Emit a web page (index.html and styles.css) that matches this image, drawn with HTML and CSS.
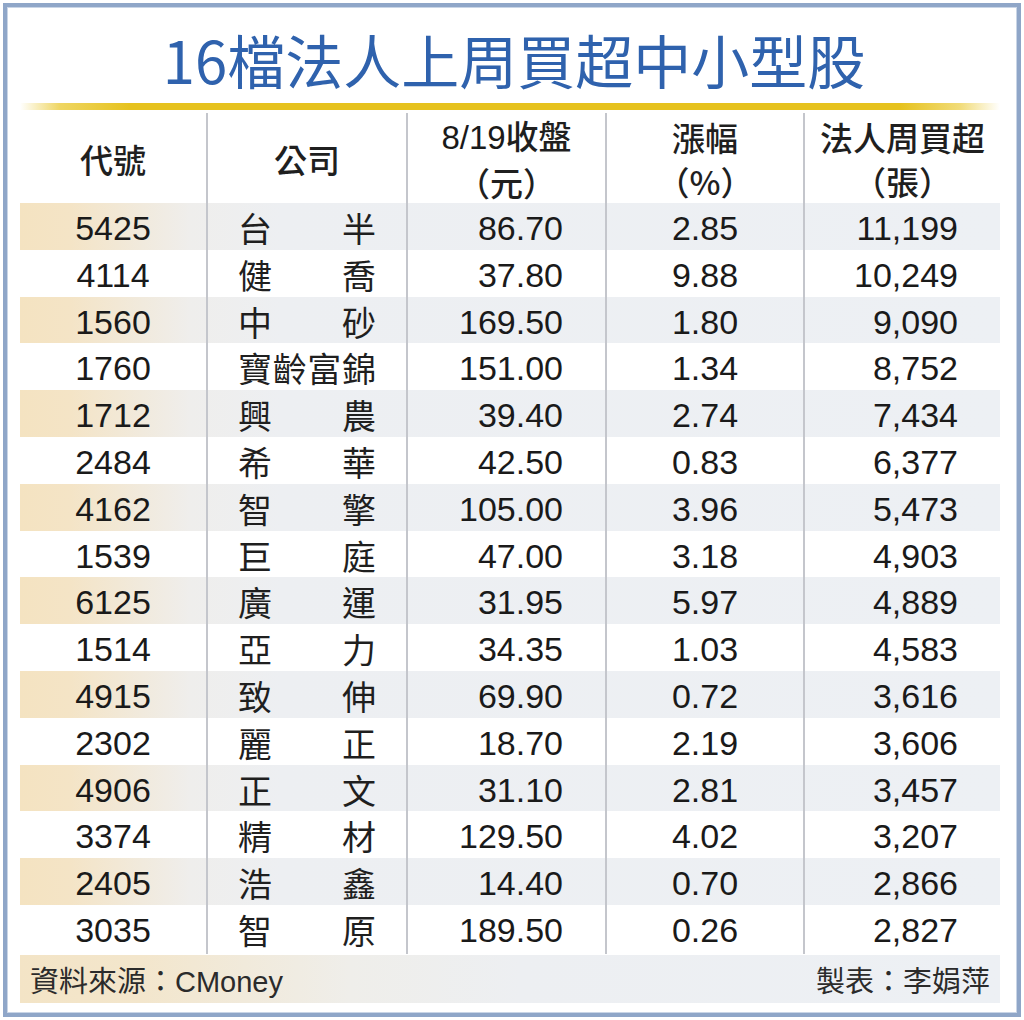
FILE: index.html
```html
<!DOCTYPE html>
<html lang="zh-Hant">
<head>
<meta charset="utf-8">
<title>16檔法人上周買超中小型股</title>
<link rel="stylesheet" href="styles.css">
</head>
<body>
<div class="frame">
  <h1 class="title">16檔法人上周買超中小型股</h1>
  <div class="rule"></div>
  <div class="table">
    <div class="row head">
      <div class="cell c1"><span class="hz">代號</span></div>
      <div class="cell c2"><span class="hz">公司</span></div>
      <div class="cell c3"><span>8/19<span class="hz">收盤</span></span><span class="hz">（元）</span></div>
      <div class="cell c4"><span class="hz">漲幅</span><span class="hz">（%）</span></div>
      <div class="cell c5"><span class="hz">法人周買超</span><span class="hz">（張）</span></div>
    </div>
    <div class="row"><div class="cell c1">5425</div><div class="cell c2"><span class="name">台半</span></div><div class="cell c3">86.70</div><div class="cell c4">2.85</div><div class="cell c5">11,199</div></div>
    <div class="row"><div class="cell c1">4114</div><div class="cell c2"><span class="name">健喬</span></div><div class="cell c3">37.80</div><div class="cell c4">9.88</div><div class="cell c5">10,249</div></div>
    <div class="row"><div class="cell c1">1560</div><div class="cell c2"><span class="name">中砂</span></div><div class="cell c3">169.50</div><div class="cell c4">1.80</div><div class="cell c5">9,090</div></div>
    <div class="row"><div class="cell c1">1760</div><div class="cell c2"><span class="name">寶齡富錦</span></div><div class="cell c3">151.00</div><div class="cell c4">1.34</div><div class="cell c5">8,752</div></div>
    <div class="row"><div class="cell c1">1712</div><div class="cell c2"><span class="name">興農</span></div><div class="cell c3">39.40</div><div class="cell c4">2.74</div><div class="cell c5">7,434</div></div>
    <div class="row"><div class="cell c1">2484</div><div class="cell c2"><span class="name">希華</span></div><div class="cell c3">42.50</div><div class="cell c4">0.83</div><div class="cell c5">6,377</div></div>
    <div class="row"><div class="cell c1">4162</div><div class="cell c2"><span class="name">智擎</span></div><div class="cell c3">105.00</div><div class="cell c4">3.96</div><div class="cell c5">5,473</div></div>
    <div class="row"><div class="cell c1">1539</div><div class="cell c2"><span class="name">巨庭</span></div><div class="cell c3">47.00</div><div class="cell c4">3.18</div><div class="cell c5">4,903</div></div>
    <div class="row"><div class="cell c1">6125</div><div class="cell c2"><span class="name">廣運</span></div><div class="cell c3">31.95</div><div class="cell c4">5.97</div><div class="cell c5">4,889</div></div>
    <div class="row"><div class="cell c1">1514</div><div class="cell c2"><span class="name">亞力</span></div><div class="cell c3">34.35</div><div class="cell c4">1.03</div><div class="cell c5">4,583</div></div>
    <div class="row"><div class="cell c1">4915</div><div class="cell c2"><span class="name">致伸</span></div><div class="cell c3">69.90</div><div class="cell c4">0.72</div><div class="cell c5">3,616</div></div>
    <div class="row"><div class="cell c1">2302</div><div class="cell c2"><span class="name">麗正</span></div><div class="cell c3">18.70</div><div class="cell c4">2.19</div><div class="cell c5">3,606</div></div>
    <div class="row"><div class="cell c1">4906</div><div class="cell c2"><span class="name">正文</span></div><div class="cell c3">31.10</div><div class="cell c4">2.81</div><div class="cell c5">3,457</div></div>
    <div class="row"><div class="cell c1">3374</div><div class="cell c2"><span class="name">精材</span></div><div class="cell c3">129.50</div><div class="cell c4">4.02</div><div class="cell c5">3,207</div></div>
    <div class="row"><div class="cell c1">2405</div><div class="cell c2"><span class="name">浩鑫</span></div><div class="cell c3">14.40</div><div class="cell c4">0.70</div><div class="cell c5">2,866</div></div>
    <div class="row"><div class="cell c1">3035</div><div class="cell c2"><span class="name">智原</span></div><div class="cell c3">189.50</div><div class="cell c4">0.26</div><div class="cell c5">2,827</div></div>
  </div>
  <div class="footer">
    <span>資料來源：CMoney</span>
    <span>製表：李娟萍</span>
  </div>
</div>
</body>
</html>
```

FILE: styles.css
```css
html, body {
  margin: 0;
  padding: 0;
  background: #ffffff;
}

body {
  font-family: "Liberation Sans", "Noto Sans CJK TC", sans-serif;
  color: #1a1a1a;
}

.frame {
  box-sizing: border-box;
  margin: 3px;
  width: 1018px;
  height: 1014px;
  border: 4px solid #8fa6c8;
  box-shadow: inset 0 0 0 1px #c9d5e6;
  padding: 0 17px 0 13px;
  background: #fff;
}

.title {
  margin: 0;
  padding: 12px 0 0 8px;
  height: 84px;
  line-height: 80px;
  text-align: center;
  font-family: "Noto Sans CJK TC", sans-serif;
  font-size: 58px;
  font-weight: 400;
  color: #2f62ad;
}

.rule {
  height: 7px;
  background: linear-gradient(to right,
    rgba(232, 196, 32, 0) 0,
    rgba(232, 196, 32, 0.7) 40px,
    #e6c21e 110px,
    #e6c21e 880px,
    rgba(232, 196, 32, 0.6) 940px,
    rgba(232, 196, 32, 0) 100%);
}

.table {
  margin-top: 3px;
  display: flex;
  flex-direction: column;
}

.row {
  display: grid;
  grid-template-columns: 186px 200px 199px 198px 197px;
  height: 46.8px;
  font-size: 34px;
  line-height: 46.8px;
}

.row:nth-child(even) {
  background: linear-gradient(to right,
    #f4e3c1 0,
    #f4e4c6 50px,
    #efeeec 170px,
    #edeff2 260px,
    #edf0f4 100%);
}

.cell {
  box-sizing: border-box;
  white-space: nowrap;
  padding-top: 2px;
}

.cell.c2, .cell.c3, .cell.c4, .cell.c5 {
  border-left: 2px solid #c4c6cc;
}

.c1 { text-align: center; }
.c2 { display: flex; justify-content: center; }
.c3 { text-align: right; padding-right: 42px; }
.c4 { text-align: center; }
.c5 { text-align: right; padding-right: 42px; }

.name {
  display: block;
  width: 138px;
  font-family: "Noto Sans CJK TC", sans-serif;
  font-size: 34px;
  text-align: justify;
  text-align-last: justify;
  color: #1f1f1f;
}

.row.head {
  height: 90px;
  line-height: 44px;
  font-size: 33px;
}

.row.head .cell {
  display: flex;
  flex-direction: column;
  justify-content: center;
  align-items: center;
  padding: 0;
}

.hz {
  font-family: "Noto Sans CJK TC", sans-serif;
  font-weight: 500;
  color: #1f1f1f;
}

.footer {
  margin-top: 3px;
  height: 48px;
  display: flex;
  justify-content: space-between;
  align-items: center;
  padding: 0 10px;
  font-family: "Liberation Sans", "Noto Sans CJK TC", sans-serif;
  font-size: 29px;
  color: #2b2b2b;
  background: linear-gradient(to right,
    #f3e4c6 0,
    #f3e6cc 120px,
    #efeeea 330px,
    #edeff2 500px,
    #edf0f4 100%);
}
```
